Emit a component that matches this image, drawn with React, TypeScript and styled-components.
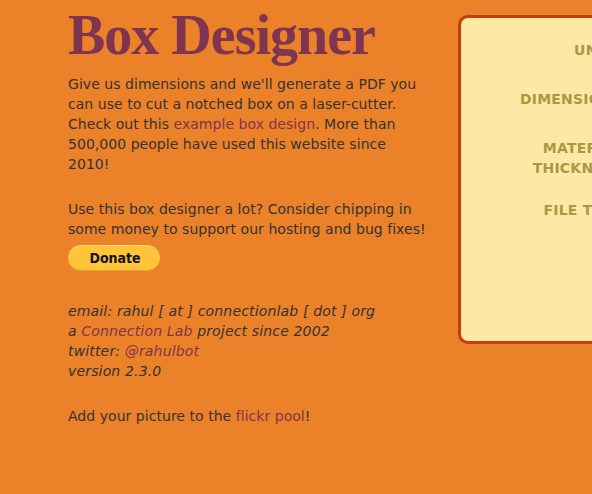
import React from "react";
import styled, { createGlobalStyle } from "styled-components";

const GlobalStyle = createGlobalStyle`
  html, body {
    margin: 0;
    height: 100%;
    overflow: hidden;
    background: #eb8128;
  }
  body {
    font-family: "DejaVu Sans", Verdana, sans-serif;
    font-size: 14px;
    line-height: 20px;
    letter-spacing: 0.04px;
    color: #333333;
  }
`;

const Page = styled.div`
  display: flex;
  align-items: flex-start;
  width: 1000px;
  padding-left: 68px;
`;

const Intro = styled.div`
  flex: none;
  width: 360px;
`;

const Title = styled.h1`
  margin: 5px 0 0;
  font-family: "Liberation Serif", "Times New Roman", serif;
  font-size: 56px;
  font-weight: bold;
  line-height: 60px;
  letter-spacing: -1px;
  color: #7f3451;
`;

const Para = styled.p<{ $flush?: boolean }>`
  margin: 0 0 ${(p) => (p.$flush ? 0 : 25)}px;
  white-space: nowrap;
`;

const FirstPara = styled(Para)`
  margin-top: 9px;
`;

const Contact = styled(Para)`
  font-style: italic;
  letter-spacing: 0.16px;
`;

const Link = styled.a`
  color: #7f3451;
  text-decoration: none;
`;

const DonateButton = styled.button`
  display: block;
  width: 92px;
  height: 26px;
  margin: 6px 0 30px;
  padding: 0 0 0 2px;
  border: 0;
  border-top: 1px solid #ffd97a;
  border-bottom: 1px solid #dda63a;
  border-radius: 13px;
  background: #ffc439;
  color: #111111;
  font-family: "DejaVu Sans Condensed", "DejaVu Sans", sans-serif;
  font-stretch: condensed;
  font-size: 14px;
  font-weight: bold;
  line-height: 24px;
`;

const Panel = styled.form`
  flex: none;
  box-sizing: border-box;
  width: 500px;
  height: 329px;
  margin: 15px 0 0 30px;
  padding: 22px 0 0;
  border: 3px solid #c63c0e;
  border-radius: 10px;
  background: #fde8a6;
`;

const Field = styled.div<{ $gap: number }>`
  width: 162px;
  margin-bottom: ${(p) => p.$gap}px;
  text-align: right;
  font-weight: bold;
  letter-spacing: 0.2px;
  color: #a89a44;
`;

export default function App() {
  return (
    <>
      <GlobalStyle />
      <Page>
        <Intro>
          <Title>Box Designer</Title>
          <FirstPara>
            Give us dimensions and we'll generate a PDF you
            <br />
            can use to cut a notched box on a laser-cutter.
            <br />
            Check out this <Link href="#">example box design</Link>. More than
            <br />
            500,000 people have used this website since
            <br />
            2010!
          </FirstPara>
          <Para $flush>
            Use this box designer a lot? Consider chipping in
            <br />
            some money to support our hosting and bug fixes!
          </Para>
          <DonateButton type="button">Donate</DonateButton>
          <Contact>
            email: rahul [ at ] connectionlab [ dot ] org
            <br />
            a <Link href="#">Connection Lab</Link> project since 2002
            <br />
            twitter: <Link href="#">@rahulbot</Link>
            <br />
            version 2.3.0
          </Contact>
          <Para>
            Add your picture to the <Link href="#">flickr pool</Link>!
          </Para>
        </Intro>
        <Panel>
          <Field $gap={29}>UNITS</Field>
          <Field $gap={29}>DIMENSIONS</Field>
          <Field $gap={22}>
            MATERIAL
            <br />
            THICKNESS
          </Field>
          <Field $gap={0}>FILE TYPE</Field>
        </Panel>
      </Page>
    </>
  );
}
